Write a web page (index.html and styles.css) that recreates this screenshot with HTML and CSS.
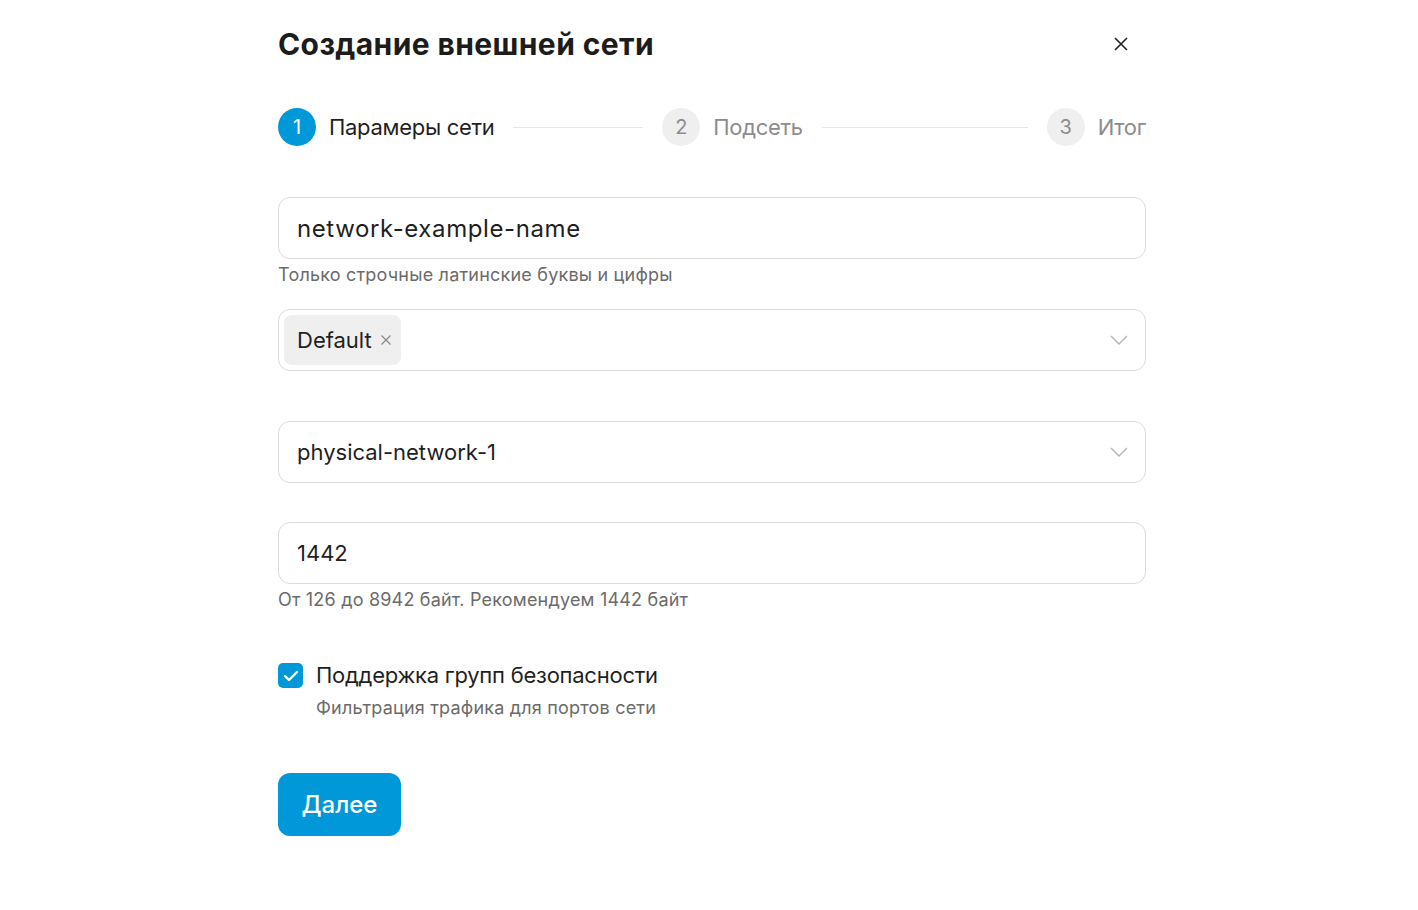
FILE: index.html
```html
<!DOCTYPE html>
<html lang="ru">
<head>
<meta charset="utf-8">
<title>Создание внешней сети</title>
<link rel="stylesheet" href="styles.css">
</head>
<body>
<div class="dialog">
  <div class="header">
    <h1 class="title">Создание внешней сети</h1>
    <button class="close" aria-label="Закрыть">
      <svg width="14" height="14" viewBox="0 0 14 14"><path d="M1 1L13 13M13 1L1 13" stroke="#222" stroke-width="1.6" fill="none"/></svg>
    </button>
  </div>

  <div class="stepper">
    <div class="step active"><span class="num">1</span><span class="label">Парамеры сети</span><span class="line"></span></div>
    <div class="step"><span class="num">2</span><span class="label">Подсеть</span><span class="line"></span></div>
    <div class="step last"><span class="num">3</span><span class="label">Итог</span></div>
  </div>

  <div class="field f-name">
    <div class="input big"><span class="value">network-example-name</span></div>
    <div class="hint">Только строчные латинские буквы и цифры</div>
  </div>

  <div class="field f-tags">
    <div class="input select tags">
      <span class="chip">Default
        <svg width="12" height="12" viewBox="0 0 12 12"><path d="M1.5 1.5L10.5 10.5M10.5 1.5L1.5 10.5" stroke="#8a8a8a" stroke-width="1.3" fill="none"/></svg>
      </span>
      <svg class="chev" width="18" height="10" viewBox="0 0 18 10"><path d="M1 1L9 9L17 1" stroke="#b5b5b5" stroke-width="1.4" fill="none"/></svg>
    </div>
  </div>

  <div class="field f-phys">
    <div class="input select"><span class="value">physical-network-1</span>
      <svg class="chev" width="18" height="10" viewBox="0 0 18 10"><path d="M1 1L9 9L17 1" stroke="#b5b5b5" stroke-width="1.4" fill="none"/></svg>
    </div>
  </div>

  <div class="field f-mtu">
    <div class="input"><span class="value">1442</span></div>
    <div class="hint">От 126 до 8942 байт. Рекомендуем 1442 байт</div>
  </div>

  <div class="check">
    <span class="box">
      <svg width="16" height="12" viewBox="0 0 16 12"><path d="M2 6.2L6 10L14 2" stroke="#fff" stroke-width="2.4" fill="none" stroke-linecap="round" stroke-linejoin="round"/></svg>
    </span>
    <div class="check-text">
      <div class="check-label">Поддержка групп безопасности</div>
      <div class="check-sub">Фильтрация трафика для портов сети</div>
    </div>
  </div>

  <button class="primary">Далее</button>
</div>
</body>
</html>
```

FILE: styles.css
```css
* { box-sizing: border-box; }
html, body { margin: 0; padding: 0; background: #fff; }
body {
  font-family: Inter, "Noto Sans", "DejaVu Sans", sans-serif;
  color: #1f1f1f;
}
.dialog {
  width: 868px;
  margin-left: 278px;
  padding-top: 26px;
}
.header {
  display: flex;
  align-items: center;
  justify-content: space-between;
  height: 36px;
}
.title {
  margin: 0;
  font-size: 30px;
  font-weight: 700;
  line-height: 36px;
  letter-spacing: 0.4px;
  color: #1c1c1c;
}
.close {
  border: 0;
  background: none;
  padding: 0;
  margin-right: 18px;
  width: 14px;
  height: 14px;
  display: flex;
}
.stepper {
  display: flex;
  align-items: center;
  margin-top: 46px;
  height: 38px;
}
.step {
  flex: 1;
  display: flex;
  align-items: center;
  gap: 13px;
}
.step.last { flex: none; }
.num {
  flex: none;
  width: 38px;
  height: 38px;
  border-radius: 50%;
  background: #efefef;
  color: #8c8c8c;
  display: flex;
  align-items: center;
  justify-content: center;
  font-size: 20px;
}
.label {
  font-size: 22px;
  letter-spacing: -0.3px;
  color: #8c8c8c;
}
.step.active .num { background: #0098d8; color: #fff; }
.step.active .label { color: #1f1f1f; }
.line {
  flex: 1;
  height: 1px;
  background: #e6e6e6;
  margin: 1px 19px 0 6px;
}
.f-name { margin-top: 51px; }
.f-tags { margin-top: 23px; }
.f-phys { margin-top: 50px; }
.f-mtu { margin-top: 39px; }
.input {
  height: 62px;
  border: 1px solid #dcdcdc;
  border-radius: 12px;
  display: flex;
  align-items: center;
  padding: 0 18px;
  font-size: 22px;
  color: #1f1f1f;
}
.input.big { font-size: 24px; letter-spacing: 0.6px; }
.input.select { justify-content: space-between; padding-right: 17px; }
.input.tags { padding-left: 5px; }
.chip {
  display: flex;
  align-items: center;
  gap: 8px;
  height: 50px;
  padding: 0 9px 0 13px;
  background: #efefef;
  border-radius: 8px;
  font-size: 22px;
}
.chev { display: block; }
.hint {
  margin-top: 5px;
  font-size: 18px;
  line-height: 22px;
  letter-spacing: 0.2px;
  color: #6b6b6b;
}
.check {
  display: flex;
  gap: 13px;
  margin-top: 52px;
}
.box {
  flex: none;
  width: 25px;
  height: 25px;
  border-radius: 5px;
  background: #0098d8;
  display: flex;
  align-items: center;
  justify-content: center;
}
.check-label {
  font-size: 22px;
  line-height: 24px;
  letter-spacing: -0.25px;
  color: #1f1f1f;
}
.check-sub {
  margin-top: 10px;
  font-size: 18px;
  line-height: 22px;
  letter-spacing: 0.2px;
  color: #6b6b6b;
}
.primary {
  display: block;
  margin-top: 54px;
  height: 63px;
  width: 123px;
  border: 0;
  border-radius: 12px;
  background: #0098d8;
  color: #fff;
  font-family: inherit;
  font-size: 24px;
  font-weight: 500;
}
```
